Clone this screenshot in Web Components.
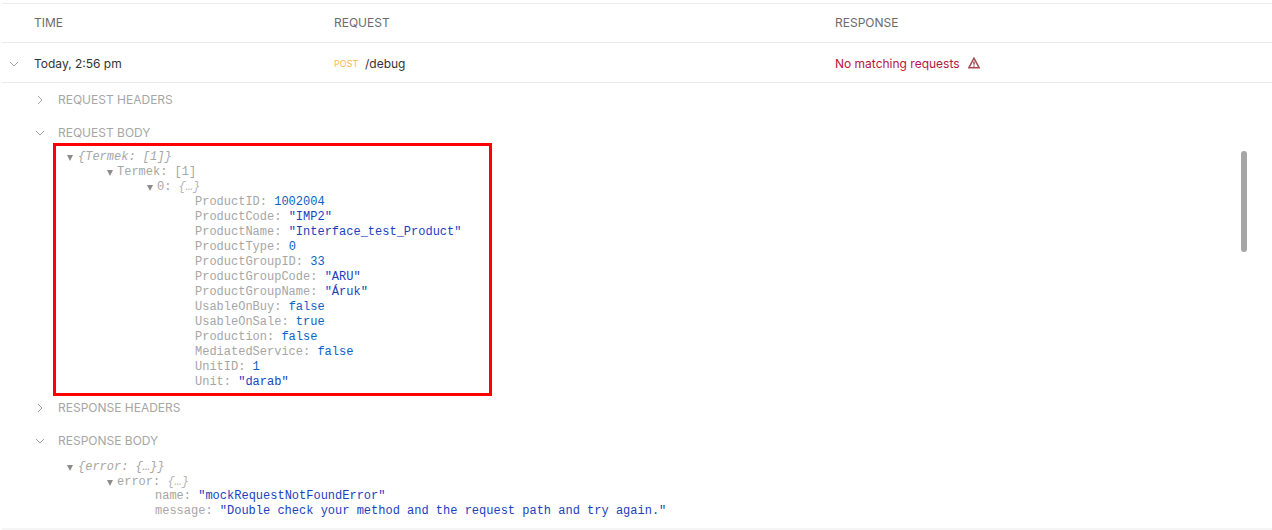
<!DOCTYPE html>
<html>
<head>
<meta charset="utf-8">
<title>Mock calls</title>
<style>
    html, body { margin: 0; height: 100%; overflow: hidden; background: #fff; }
    body { font-family: Inter, "Liberation Sans", sans-serif; }
</style>
</head>
<body>
<call-log>
    <call-head></call-head>
    <call-row time="Today, 2:56 pm" method="POST" path="/debug" status="No matching requests"></call-row>
    <call-section title="REQUEST HEADERS"></call-section>
    <call-section title="REQUEST BODY" open marked>
        <json-line depth="0" arrow italic><span>{Termek: [1]}</span></json-line>
        <json-line depth="1" arrow key="Termek"><span>[1]</span></json-line>
        <json-line depth="2" arrow key="0"><i>{…}</i></json-line>
        <json-line depth="3" key="ProductID" type="num">1002004</json-line>
        <json-line depth="3" key="ProductCode" type="str">"IMP2"</json-line>
        <json-line depth="3" key="ProductName" type="str">"Interface_test_Product"</json-line>
        <json-line depth="3" key="ProductType" type="num">0</json-line>
        <json-line depth="3" key="ProductGroupID" type="num">33</json-line>
        <json-line depth="3" key="ProductGroupCode" type="str">"ARU"</json-line>
        <json-line depth="3" key="ProductGroupName" type="str">"Áruk"</json-line>
        <json-line depth="3" key="UsableOnBuy" type="num">false</json-line>
        <json-line depth="3" key="UsableOnSale" type="num">true</json-line>
        <json-line depth="3" key="Production" type="num">false</json-line>
        <json-line depth="3" key="MediatedService" type="num">false</json-line>
        <json-line depth="3" key="UnitID" type="num">1</json-line>
        <json-line depth="3" key="Unit" type="str">"darab"</json-line>
    </call-section>
    <call-section title="RESPONSE HEADERS"></call-section>
    <call-section title="RESPONSE BODY" open>
        <json-line depth="0" arrow italic><span>{error: {…}}</span></json-line>
        <json-line depth="1" arrow key="error"><i>{…}</i></json-line>
        <json-line depth="2" key="name" type="str" style="margin-top:-1px">"mockRequestNotFoundError"</json-line>
        <json-line depth="2" key="message" type="str">"Double check your method and the request path and try again."</json-line>
    </call-section>
</call-log>

<script>
const chevron = dir => `<svg width="10" height="10" viewBox="0 0 10 10" fill="none" stroke="#a0a0a0" stroke-width="1">
    <path d="${dir === 'down' ? 'M1 3l4 4 4-4' : 'M3 1l4 4-4 4'}"/></svg>`;

class CallLog extends HTMLElement {
    constructor() {
        super();
        this.attachShadow({ mode: 'open' });
        this.shadowRoot.innerHTML = `
            <style>
                :host { display: block; position: relative; height: 530px; padding-top: 3px; box-sizing: border-box; overflow: hidden; }
                .thumb { position: absolute; left: 1241px; top: 151px; width: 6px; height: 101px; border-radius: 3px; background: #a6a6a6; }
                .foot { position: absolute; left: 2px; right: 0; bottom: 0; height: 2px; background: #f5f5f5; }
            </style>
            <slot></slot>
            <div class="thumb"></div>
            <div class="foot"></div>
        `;
    }
}

class CallHead extends HTMLElement {
    constructor() {
        super();
        this.attachShadow({ mode: 'open' });
        this.shadowRoot.innerHTML = `
            <style>
                :host {
                    display: grid; grid-template-columns: 332px 501px 1fr; align-items: center;
                    height: 40px; margin-left: 2px; box-sizing: border-box; padding-bottom: 2px;
                    border-top: 1px solid #ebebeb; border-bottom: 1px solid #ebebeb;
                    font-size: 12px; color: #6b6b6b;
                }
                .time { padding-left: 32px; }
            </style>
            <span class="time">TIME</span><span>REQUEST</span><span>RESPONSE</span>
        `;
    }
}

class CallRow extends HTMLElement {
    constructor() {
        super();
        this.attachShadow({ mode: 'open' });
        this.shadowRoot.innerHTML = `
            <style>
                :host {
                    display: grid; grid-template-columns: 332px 501px 1fr; align-items: center;
                    height: 40px; box-sizing: border-box; margin-left: 2px; padding-top: 2px;
                    border-bottom: 1px solid #ebebeb; font-size: 12px; color: #333;
                }
                .time { display: flex; align-items: center; gap: 15px; padding-left: 7px; }
                .req { display: flex; align-items: center; gap: 8px; }
                .method { font-size: 9px; color: #ffb74d; width: 23px; }
                .res { display: flex; align-items: center; gap: 8px; color: #b8143f; }
                .res svg { margin-top: -2px; }
            </style>
            <div class="time">${chevron('down')}<span>${this.getAttribute('time')}</span></div>
            <div class="req"><span class="method">${this.getAttribute('method')}</span><span>${this.getAttribute('path')}</span></div>
            <div class="res"><span>${this.getAttribute('status')}</span>
                <svg width="12" height="12" viewBox="0 0 12 12" fill="none" stroke="#a84a52" stroke-width="1.5">
                    <path d="M6 1.2L.8 10.8h10.4z"/><path d="M6 4.5v3.2M6 8.4v1.4"/>
                </svg>
            </div>
        `;
    }
}

class CallSection extends HTMLElement {
    constructor() {
        super();
        this.attachShadow({ mode: 'open' });
        const open = this.hasAttribute('open');
        this.shadowRoot.innerHTML = `
            <style>
                :host { display: block; padding-left: 35px; }
                .title {
                    display: flex; align-items: center; gap: 13px; height: 33px;
                    font-size: 12px; color: #a6a6a6;
                }
                .body { margin: -2px 0 0 18px; padding: 5px 0 6px 13px; }
                :host([marked]) .body {
                    box-sizing: border-box; width: 439px; border: 3px solid #f00;
                    padding: 4px 0 3px 10px; margin: -6px 0 -5px 18px;
                }
            </style>
            <div class="title">${chevron(open ? 'down' : 'right')}<span>${this.getAttribute('title')}</span></div>
            ${open ? '<div class="body"><slot></slot></div>' : ''}
        `;
    }
}

class JsonLine extends HTMLElement {
    constructor() {
        super();
        this.attachShadow({ mode: 'open' });
        const depth = +this.getAttribute('depth');
        const key = this.getAttribute('key');
        const type = this.getAttribute('type');
        const arrow = this.hasAttribute('arrow');
        this.shadowRoot.innerHTML = `
            <style>
                :host {
                    display: flex; height: 15px; white-space: pre;
                    font: 12px/15px "Liberation Mono", "DejaVu Sans Mono", monospace; color: #a6a6a6;
                }
                :host([italic]) { font-style: italic; }
                .pad { flex: none; }
                .tri { flex: none; width: 0; height: 0; margin: 5px 4px 0 0; border: solid transparent; border-width: 6px 3.5px 0; border-top-color: #8c8c8c; }
                :host([italic]) .tri { margin-right: 5px; }
                .str { color: #1a3fbf; }
                .num { color: #0b62c4; }
                ::slotted(i) { color: #b5b5b5; }
            </style>
            <span class="pad" style="width:${depth * 40 + (arrow ? 0 : 8) + 1}px"></span>
            ${arrow ? '<span class="tri"></span>' : ''}
            ${key ? `<span>${key}: </span>` : ''}<span class="${type || ''}"><slot></slot></span>
        `;
    }
}

customElements.define('call-log', CallLog);
customElements.define('call-head', CallHead);
customElements.define('call-row', CallRow);
customElements.define('call-section', CallSection);
customElements.define('json-line', JsonLine);
</script>
</body>
</html>
